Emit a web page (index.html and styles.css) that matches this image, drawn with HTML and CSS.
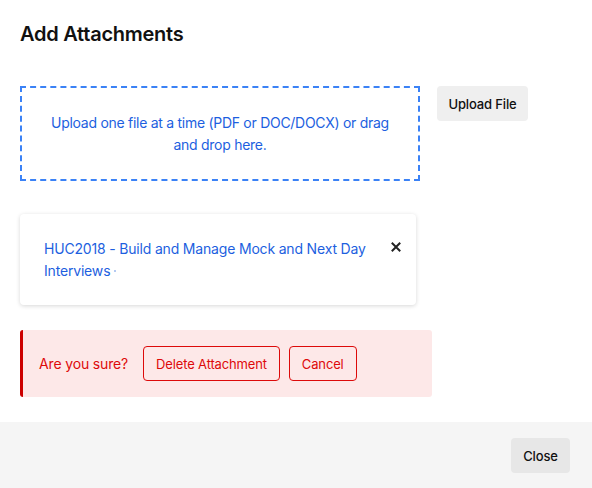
FILE: index.html
```html
<!DOCTYPE html>
<html>
<head>
<meta charset="utf-8">
<link rel="stylesheet" href="styles.css">
</head>
<body>
<div class="modal">
  <div class="modal-body">
    <h1 class="title">Add Attachments</h1>
    <div class="upload-row">
      <div class="dropzone">Upload one file at a time (PDF or DOC/DOCX) or drag and drop here.</div>
      <button class="btn btn-grey">Upload File</button>
    </div>
    <div class="file-card">
      <div class="file-name"><a class="file-link">HUC2018 - Build and Manage Mock and Next Day Interviews</a><span class="dot"></span></div>
      <span class="remove">
        <svg width="10" height="10" viewBox="0 0 10 10"><path d="M1.5 1.5 L8.5 8.5 M8.5 1.5 L1.5 8.5" stroke="#222" stroke-width="2" stroke-linecap="square"/></svg>
      </span>
    </div>
    <div class="confirm">
      <span class="confirm-text">Are you sure?</span>
      <button class="btn btn-outline-red">Delete Attachment</button>
      <button class="btn btn-outline-red">Cancel</button>
    </div>
  </div>
  <div class="modal-footer">
    <button class="btn btn-close">Close</button>
  </div>
</div>
</body>
</html>
```
FILE: styles.css
```css
* { box-sizing: border-box; }
html, body { margin: 0; padding: 0; background: #fff; }
body { font-family: Inter, "Noto Sans", sans-serif; color: #111; }
.modal { width: 592px; height: 488px; display: flex; flex-direction: column; }
.modal-body { padding: 22px 20px 25px; flex: 1; }
.title { margin: 0 0 40px; font-size: 20px; line-height: 24px; font-weight: 600; color: #111; letter-spacing: -0.25px; }
.upload-row { display: flex; align-items: flex-start; gap: 17px; }
.dropzone {
  width: 400px; height: 95px; border: 2px dashed #3b82f6;
  display: flex; align-items: center; justify-content: center; text-align: center;
  padding: 0 16px; font-size: 14px; line-height: 22px; color: #1d5fe0; letter-spacing: -0.28px;
}
.btn { font-family: inherit; font-size: 13px; font-weight: 500; height: 35px; border-radius: 4px; cursor: pointer; white-space: nowrap; letter-spacing: -0.15px; }
.btn-grey { background: #efefef; border: none; color: #111; padding: 0; width: 91px; }
.file-card {
  margin-top: 33px; width: 396px; height: 91px; background: #fff; border-radius: 4px;
  box-shadow: 0 1px 4px rgba(0,0,0,0.16);
  padding: 24px 15px 0 24px; display: flex; align-items: flex-start;
}
.file-name { flex: 1; font-size: 14px; line-height: 22px; color: #1d5fe0; padding-right: 10px; letter-spacing: -0.18px; }
.dot { display: inline-block; width: 2px; height: 2px; border-radius: 1px; background: #9bb8ee; margin-left: 4px; vertical-align: 4px; }
.remove { width: 10px; height: 10px; margin-top: 4px; display: flex; }
.confirm {
  margin-top: 25px; width: 412px; height: 67px; background: #fde8e8;
  border-left: 3px solid #cc0000; border-radius: 3px;
  display: flex; align-items: center; padding-left: 16px;
}
.confirm-text { font-size: 14px; color: #dd0a0a; margin-right: 15px; letter-spacing: -0.15px; }
.btn-outline-red { background: transparent; border: 1px solid #dd0a0a; color: #dd0a0a; font-weight: 400; font-size: 13px; padding: 0 12px; margin-right: 9px; }
.modal-footer { height: 66px; background: #f5f5f5; display: flex; justify-content: flex-end; align-items: flex-start; padding: 16px 22px 0 0; }
.btn-close { background: #e7e7e7; border: none; width: 59px; color: #111; }
```
